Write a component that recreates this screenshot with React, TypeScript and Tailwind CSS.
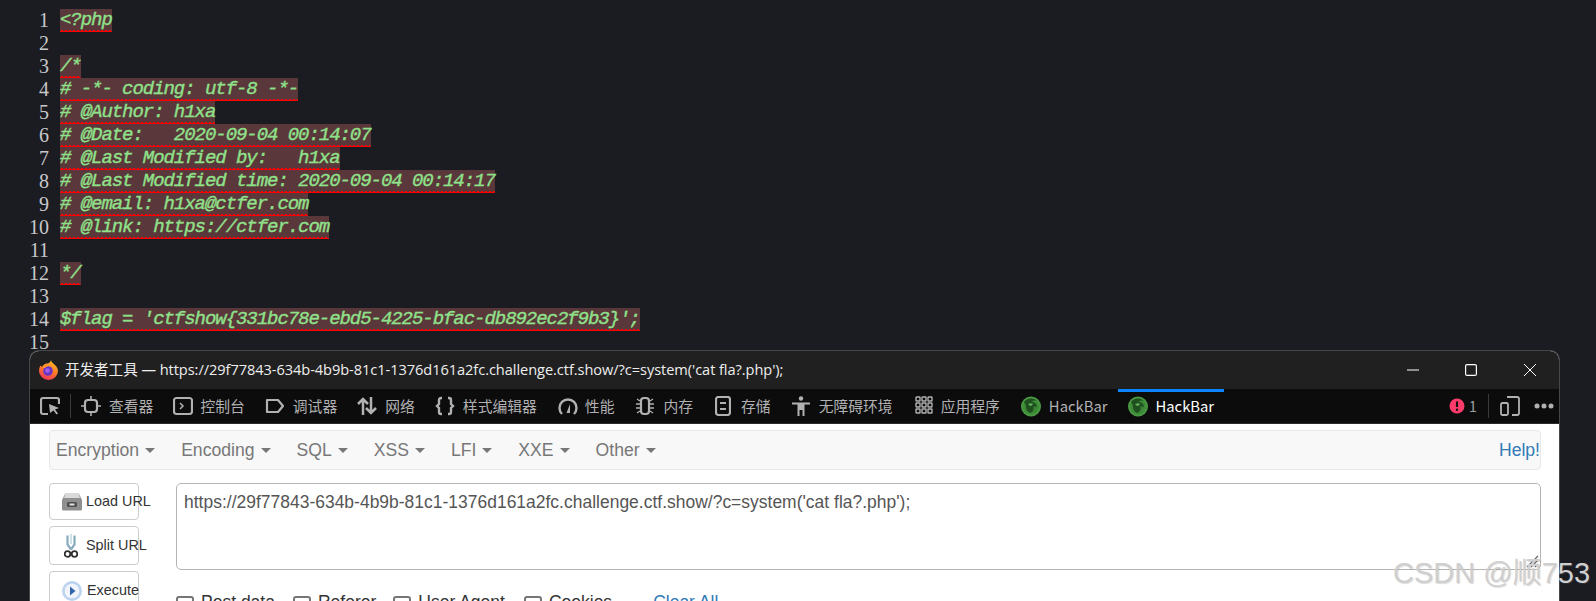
import React from 'react';

const codeLines = [
  '<?php',
  '',
  '/*',
  '# -*- coding: utf-8 -*-',
  '# @Author: h1xa',
  '# @Date:   2020-09-04 00:14:07',
  '# @Last Modified by:   h1xa',
  '# @Last Modified time: 2020-09-04 00:14:17',
  '# @email: h1xa@ctfer.com',
  '# @link: https://ctfer.com',
  '',
  '*/',
  '',
  "$flag = 'ctfshow{331bc78e-ebd5-4225-bfac-db892ec2f9b3}';",
  '',
];

const Ico: React.FC<{ w?: number; children: React.ReactNode }> = ({ w = 20, children }) => (
  <svg width={w} height={20} viewBox={`0 0 ${w} 20`} fill="none" stroke="#b1b1b3" strokeWidth={2.2} className="shrink-0">
    {children}
  </svg>
);

const FirefoxIcon = () => (
  <svg width="19" height="20" viewBox="0 0 19 20" className="shrink-0">
    <defs>
      <linearGradient id="ff" x1="0.7" y1="0" x2="0.3" y2="1">
        <stop offset="0" stopColor="#ffc02e" />
        <stop offset="0.5" stopColor="#ff7a26" />
        <stop offset="1" stopColor="#f2325f" />
      </linearGradient>
    </defs>
    <path d="M12 0c0 2 2 3 4 5 2 2 3 4 3 6a9.500 9 0 0 1-19 0c0-2 .5-4 1.500-5.500L3 7c1-2 3-3.500 5-3.500C10 3.500 11.500 2 12 0z" fill="url(#ff)" />
    <circle cx="9" cy="11" r="4.800" fill="#6a35c4" />
    <circle cx="8.500" cy="10.500" r="2.300" fill="#a060ea" />
    <path d="M3 8c2-2 5-3 8-2-2 0-4 .5-5 2z" fill="#ff9a2e" />
  </svg>
);

const HackBarIcon: React.FC<{ id: string }> = ({ id }) => (
  <svg width="20" height="21" viewBox="0 0 20 21" className="shrink-0">
    <defs>
      <radialGradient id={id} cx="0.5" cy="0.5" r="0.55">
        <stop offset="0" stopColor="#2f6f2c" />
        <stop offset="0.7" stopColor="#3f8f3a" />
        <stop offset="1" stopColor="#56a84e" />
      </radialGradient>
    </defs>
    <circle cx="10" cy="10.500" r="10" fill={`url(#${id})`} />
    <path d="M3 6c3-4 9-5 13-1-3-1-5 0-6 1 3 0 6 2 6 5-2-1-3-1-4 0 1 2 0 5-3 6-2-1-4-3-4-6 0-2-1-4-2-5z" fill="#1f4f1e" />
    <path d="M7 8c2-1 4-1 5 0-1 1-1 2-3 2z" fill="#5fae58" />
  </svg>
);

// red squiggle the editor draws under each flagged line
const Squiggle = () => (
  <svg className="absolute left-0 bottom-0 w-full h-[3px]">
    <defs>
      <pattern id="squiggle" width="4" height="3" patternUnits="userSpaceOnUse">
        <path d="M0 3V2h1V1h2v1h1v1z" fill="#ff0000" />
      </pattern>
    </defs>
    <rect width="100%" height="3" fill="url(#squiggle)" />
  </svg>
);

const Tab: React.FC<{ icon: React.ReactNode; label: string; gap: string; left: string }> = ({ icon, label, gap, left }) => (
  <div className={`flex items-center ${gap} ${left}`}>
    {icon}
    <span className="text-[14.8px] leading-[20px] text-[#b1b1b3] whitespace-nowrap">{label}</span>
  </div>
);

const MenuItem: React.FC<{ label: string }> = ({ label }) => (
  <span className="flex items-center gap-[6px] text-[#777]">
    {label}
    <span className="w-0 h-0 border-x-[5px] border-x-transparent border-t-[5px] border-t-[#777] mt-[2px]" />
  </span>
);

const Check: React.FC<{ label: string; left?: string }> = ({ label, left = '' }) => (
  <label className={`flex items-start gap-[7px] text-[#333] ${left}`}>
    <span className="mt-[7px] w-[18px] h-[18px] rounded-[3px] border-2 border-[#767676] bg-white" />
    {label}
  </label>
);

const LoadIcon = () => (
  <svg width="20" height="19" viewBox="0 0 20 19" className="shrink-0">
    <path d="M3.500 1h13L20 8v9a1.500 1.500 0 0 1-1.500 1.500h-17A1.500 1.500 0 0 1 0 17V8z" fill="#8f8f8f" />
    <path d="M3.500 1h13L18 6H2z" fill="#d9d9d9" />
    <rect x="5" y="10" width="10" height="5" rx="1.500" fill="#4d4d4d" />
    <rect x="7.500" y="11.500" width="5" height="2" fill="#e0e0e0" />
  </svg>
);

const ScissorsIcon = () => (
  <svg width="14" height="24" viewBox="0 0 14 24" fill="none" className="shrink-0">
    <path d="M3.500 1.500v9l3.500 5M10.500 1.500v9l-3.500 5" stroke="#86abbd" strokeWidth="2.200" />
    <path d="M7 0v10" stroke="#cfe2ea" strokeWidth="2" />
    <circle cx="3.500" cy="20" r="2.800" stroke="#2f2f2f" strokeWidth="1.800" />
    <circle cx="10.500" cy="20" r="2.800" stroke="#2f2f2f" strokeWidth="1.800" />
  </svg>
);

const ExecuteIcon = () => (
  <svg width="20" height="20" viewBox="0 0 20 20" className="shrink-0">
    <circle cx="10" cy="10" r="10" fill="#bcd4ee" />
    <circle cx="10" cy="10" r="7.300" fill="#f1f5fb" />
    <path d="M8 5.500l5.500 4.500L8 14.500z" fill="#2f66ab" />
  </svg>
);

const SideButton: React.FC<{ icon: React.ReactNode; label: string; h: string; pad: string }> = ({ icon, label, h, pad }) => (
  <button className={`w-[90px] ${h} ${pad} flex items-center rounded-[4px] border border-[#ccc] bg-white text-[14.4px] text-[#333] whitespace-nowrap`}>
    {icon}
    {label}
  </button>
);

export default function App() {
  return (
    <div className="h-[601px] overflow-hidden bg-[#1b1b22] relative">
      {/* editor behind the devtools window */}
      <div className="h-[350px] overflow-hidden pt-[9px] flex">
        <div className="w-[49px] text-right font-['Liberation_Serif',serif] text-[20px] leading-[23px] text-[#c8c8c8]">
          {codeLines.map((_, i) => (
            <div key={i}>{i + 1}</div>
          ))}
        </div>
        <div className="ml-[11px] font-['Liberation_Mono',monospace] italic text-[19px] leading-[23px] tracking-[-1.05px] text-[#8fe28a] [-webkit-text-stroke:0.35px_#8fe28a]">
          {codeLines.map((line, i) => (
            <div key={i} className="h-[23px] whitespace-pre">
              {line && (
                <span className="relative inline-block h-[23px] bg-[#5a373b]">
                  {line}
                  <Squiggle />
                </span>
              )}
            </div>
          ))}
        </div>
      </div>

      {/* devtools window */}
      <div className="ml-[29px] w-[1531px] h-[251px] rounded-t-[10px] border border-b-0 border-[#45454a] bg-white overflow-hidden font-['Liberation_Sans',sans-serif]">
        <div className="h-[38px] bg-[#202020] flex items-center pl-[9px] font-['Open_Sans','Noto_Sans_CJK_SC',sans-serif] text-[14.6px] tracking-[-0.06px] text-[#eeeeee]">
          <FirefoxIcon />
          <span className="ml-[7px] whitespace-nowrap">开发者工具 — https://29f77843-634b-4b9b-81c1-1376d161a2fc.challenge.ctf.show/?c=system('cat fla?.php');</span>
          <div className="ml-auto flex items-center">
            <svg width="12" height="12" viewBox="0 0 12 12" stroke="#fff" strokeWidth="1"><path d="M0 6h12" /></svg>
            <svg width="12" height="12" viewBox="0 0 12 12" fill="none" stroke="#fff" strokeWidth="1.200" className="ml-[46px]"><rect x="0.600" y="0.600" width="10.800" height="10.800" rx="1.500" /></svg>
            <svg width="12" height="12" viewBox="0 0 12 12" stroke="#fff" strokeWidth="1" className="ml-[47px] mr-[23px]"><path d="M0 0l12 12M12 0L0 12" /></svg>
          </div>
        </div>

        <div className="h-[35px] bg-[#0c0c0c] flex items-center pl-[10px] font-['Noto_Sans_CJK_SC','Noto_Sans',sans-serif] border-b border-[#2a2a2a]">
          <Ico>
            <path d="M8 18H3a2 2 0 0 1-2-2V4a2 2 0 0 1 2-2h14a2 2 0 0 1 2 2v4" />
            <path d="M9 8l10 4-4 1.500 3 4-1.500 1-3-4L10 17z" fill="#b1b1b3" stroke="none" />
          </Ico>
          <span className="ml-[10px] w-px h-[24px] bg-[#3a3a3a] shrink-0" />
          <Tab left="ml-[10px]" gap="gap-[8px]" label="查看器" icon={<Ico><rect x="4" y="4" width="12" height="12" rx="3" /><path d="M10 0v4M10 16v4M0 10h4M16 10h4" strokeWidth="1.600" /></Ico>} />
          <Tab left="ml-[20px]" gap="gap-[7px]" label="控制台" icon={<Ico><rect x="1" y="2" width="18" height="16" rx="2.500" /><path d="M7 7l3 3-3 3" strokeWidth="1.500" /></Ico>} />
          <Tab left="ml-[20px]" gap="gap-[8px]" label="调试器" icon={<Ico><path d="M2 4h11l5 6-5 6H2z" strokeLinejoin="round" /></Ico>} />
          <Tab left="ml-[20px]" gap="gap-[8px]" label="网络" icon={<Ico><path d="M6 19V3M1 8l5-5 5 5M14 1v16M9 12l5 5 5-5" strokeWidth="2.500" /></Ico>} />
          <Tab left="ml-[20px]" gap="gap-[8px]" label="样式编辑器" icon={<Ico><path d="M7 2H6a2 2 0 0 0-2 2v4l-2 2 2 2v4a2 2 0 0 0 2 2h1M13 2h1a2 2 0 0 1 2 2v4l2 2-2 2v4a2 2 0 0 1-2 2h-1" strokeWidth="2.400" /></Ico>} />
          <Tab left="ml-[21px]" gap="gap-[7px]" label="性能" icon={<Ico><path d="M4 18a8.500 8.500 0 1 1 12 0" strokeWidth="2.400" /><path d="M12 8l0 9h-3.500z" fill="#b1b1b3" stroke="none" /></Ico>} />
          <Tab left="ml-[21px]" gap="gap-[8px]" label="内存" icon={<Ico><rect x="6" y="2" width="8" height="16" rx="3" /><path d="M5 5L2 3M5 8H1M5 12H1M5 15l-3 2M15 5l3-2M15 8h4M15 12h4M15 15l3 2" strokeWidth="1.300" /></Ico>} />
          <Tab left="ml-[22px]" gap="gap-[10px]" label="存储" icon={<Ico w={16}><rect x="1" y="1" width="14" height="18" rx="2.500" /><path d="M5 7h6M5 13h6" /></Ico>} />
          <Tab left="ml-[21px]" gap="gap-[9px]" label="无障碍环境" icon={<Ico w={18}><circle cx="9" cy="2.500" r="2.200" fill="#b1b1b3" stroke="none" /><path d="M0 6.500h18v2h-5.500V20h-2v-6h-3v6h-2V8.500H0z" fill="#b1b1b3" stroke="none" /></Ico>} />
          <Tab left="ml-[22px]" gap="gap-[8px]" label="应用程序" icon={<Ico w={18}>{[1, 7, 13].map((x) => [1, 7, 13].map((y) => <rect key={`${x}${y}`} x={x} y={y} width="4" height="4" rx="0.500" strokeWidth="1.400" />))}</Ico>} />
          <Tab left="ml-[21px]" gap="gap-[8px]" label="HackBar" icon={<HackBarIcon id="hb1" />} />
          <div className="ml-[11px] w-[106px] h-[35px] flex items-center gap-[7px] pl-[10px] relative shrink-0">
            <span className="absolute top-0 left-0 right-0 h-[3px] bg-[#0a84ff]" />
            <HackBarIcon id="hb2" />
            <span className="text-[14.8px] leading-[20px] text-white">HackBar</span>
          </div>
          <div className="ml-auto flex items-center pr-[5px]">
            <svg width="16" height="16" viewBox="0 0 16 16"><circle cx="8" cy="8" r="7.500" fill="#ff3b6b" /><path d="M8 3.500v5.500" stroke="#111" strokeWidth="2.200" /><circle cx="8" cy="11.800" r="1.200" fill="#111" /></svg>
            <span className="ml-[4px] text-[14.8px] text-[#9a9a9c]">1</span>
            <span className="ml-[11px] w-px h-[24px] bg-[#3a3a3a]" />
            <span className="ml-[11px]">
              <Ico><rect x="1" y="7" width="7" height="12" rx="1.500" strokeWidth="1.800" /><path d="M7 1h10a2 2 0 0 1 2 2v14a2 2 0 0 1-2 2h-5" strokeWidth="1.800" /></Ico>
            </span>
            <span className="ml-[14px]">
              <svg width="20" height="6" viewBox="0 0 20 6" fill="#b1b1b3"><circle cx="3" cy="3" r="2.500" /><circle cx="10" cy="3" r="2.500" /><circle cx="17" cy="3" r="2.500" /></svg>
            </span>
          </div>
        </div>

        {/* hackbar panel */}
        <div className="pt-[6px] pl-[19px] pr-[18px] text-[17.5px]">
          <div className="h-[40px] rounded-[4px] border border-[#e7e7e7] bg-[#f8f8f8] flex items-center gap-[26px] pl-[6px] text-[17.6px]">
            <MenuItem label="Encryption" />
            <MenuItem label="Encoding" />
            <MenuItem label="SQL" />
            <MenuItem label="XSS" />
            <MenuItem label="LFI" />
            <MenuItem label="XXE" />
            <MenuItem label="Other" />
            <span className="ml-auto text-[#337ab7]">Help!</span>
          </div>
          <div className="mt-[13px] flex">
            <div className="flex flex-col gap-[6px] w-[127px] shrink-0">
              <SideButton icon={<LoadIcon />} label="Load URL" h="h-[37px]" pad="pl-[12px] gap-[4px]" />
              <SideButton icon={<ScissorsIcon />} label="Split URL" h="h-[39px]" pad="pl-[14px] gap-[8px]" />
              <SideButton icon={<ExecuteIcon />} label="Execute" h="h-[39px]" pad="pl-[12px] gap-[5px]" />
            </div>
            <div className="flex-1 min-w-0">
              <div className="relative h-[87px] rounded-[5px] border border-[#b4b4b4] px-[7px] pt-[5px] text-[17.45px] tracking-[0.02px] text-[#555] whitespace-nowrap">
                https://29f77843-634b-4b9b-81c1-1376d161a2fc.challenge.ctf.show/?c=system('cat fla?.php');
                <svg width="14" height="14" viewBox="0 0 14 14" stroke="#666" strokeWidth="1.200" className="absolute right-[1px] bottom-[1px]"><path d="M2 13L13 2M6 13l7-7M10 13l3-3" /></svg>
              </div>
              <div className="mt-[19px] flex items-start">
                <Check label="Post data" />
                <Check label="Referer" left="ml-[18px]" />
                <Check label="User Agent" left="ml-[17px]" />
                <Check label="Cookies" left="ml-[19px]" />
                <span className="ml-[41px] text-[#337ab7]">Clear All</span>
              </div>
            </div>
          </div>
        </div>
      </div>

      <div className="absolute left-[1393px] top-[556px] font-['Liberation_Sans','Noto_Sans_CJK_SC',sans-serif] text-[29px] leading-[34px] whitespace-nowrap text-[#cfcfcf] [text-shadow:1px_1px_1px_rgba(120,120,120,0.25)]">
        CSDN @顺753
      </div>
    </div>
  );
}
